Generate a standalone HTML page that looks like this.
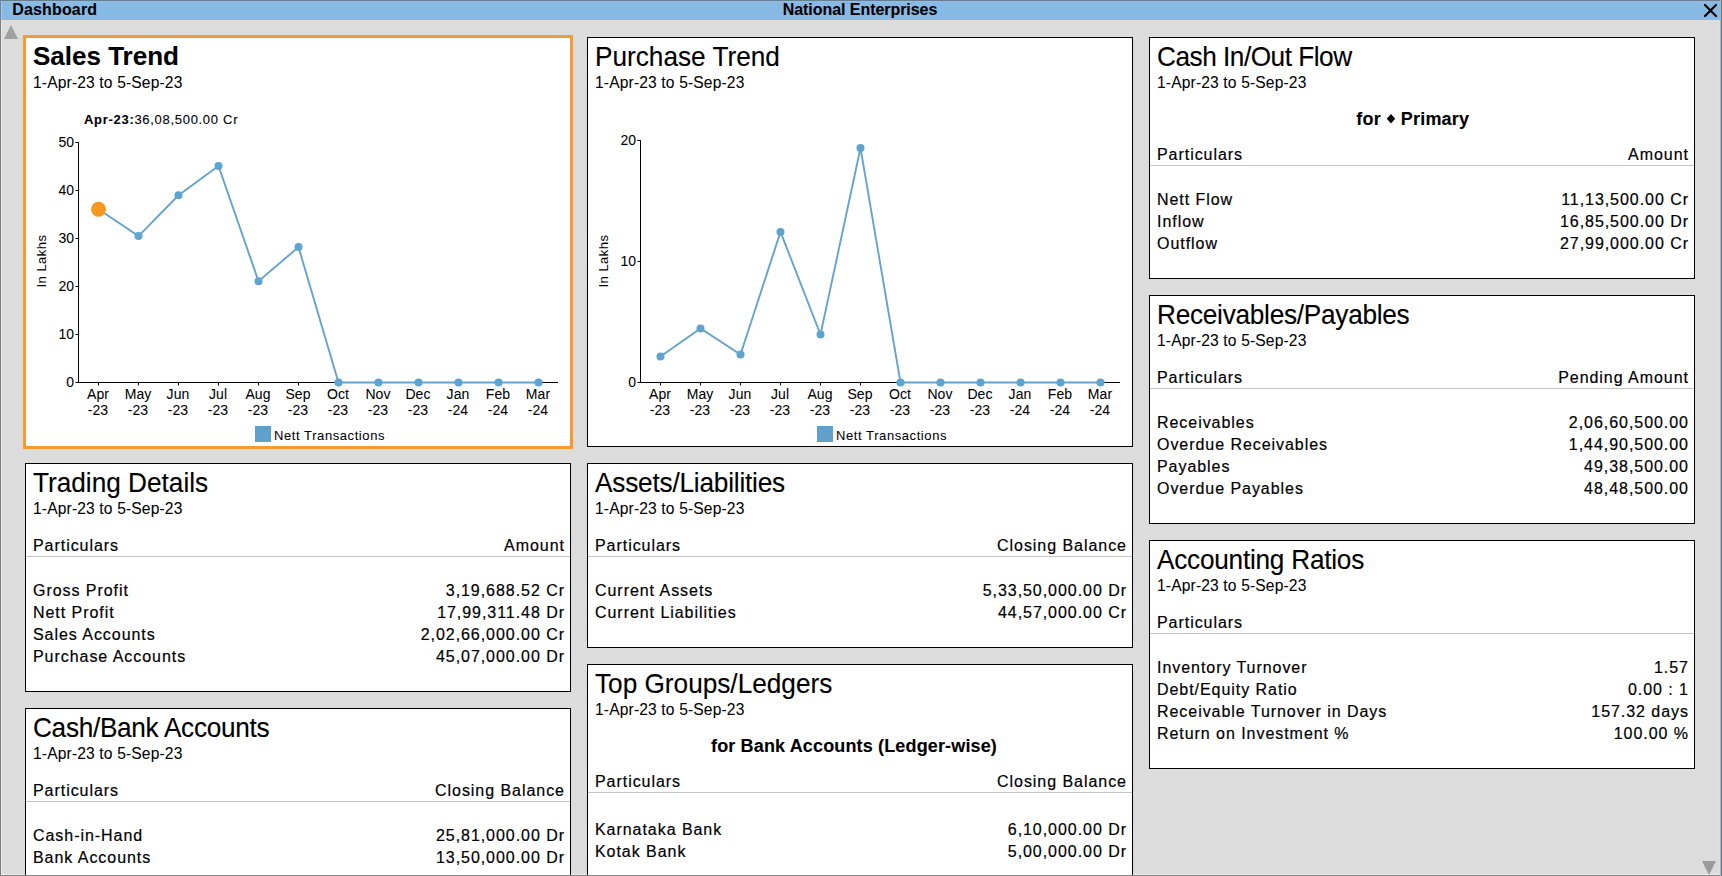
<!DOCTYPE html>
<html><head><meta charset="utf-8"><style>
html,body{margin:0;padding:0;width:1722px;height:876px;overflow:hidden;background:#dcdcdc}
body{position:relative;font-family:"Liberation Sans", sans-serif}
.abs{position:absolute}
.t{position:absolute;white-space:nowrap;line-height:1;color:#000;-webkit-text-stroke:0.25px #000}
.box{position:absolute;background:#fff;border:1px solid #000}
.focus{position:absolute;border:3px solid #f59a33;box-sizing:content-box}
.sep{position:absolute;height:1px;background:#c4c4c4}
</style></head><body>
<div class="abs" style="left:0;top:0;width:1722px;height:876px;background:#dcdcdc"></div>
<div class="abs" style="left:0;top:1px;width:1722px;height:19px;background:#87bbe6"></div>
<div class="abs" style="left:0;top:20px;width:1722px;height:1px;background:#dcdde1"></div>
<div class="abs" style="left:0;top:1px;width:1722px;height:1px;background:#9ab9da"></div>
<div class="abs" style="left:1px;top:20px;width:1px;height:856px;background:#e8e8e8"></div>
<div class="abs" style="left:0;top:874px;width:1722px;height:1px;background:#ececec"></div>
<div class="t" style="left:12.30px;top:1.56px;font-size:16px;font-weight:700;letter-spacing:0.15px;color:#000;-webkit-text-stroke:0.1px #000;">Dashboard</div>
<div class="t" style="left:860.00px;transform:translateX(-50%);top:1.56px;font-size:16px;font-weight:700;letter-spacing:-0.05px;color:#000;-webkit-text-stroke:0.1px #000;">National Enterprises</div>
<svg class="abs" width="1722" height="876" style="left:0;top:0"><path d="M1705 5L1716 16M1716 5L1705 16" stroke="#000" stroke-width="2.2" stroke-linecap="round"/><path d="M11 25L18 39H4Z" fill="#a0a0a0"/><path d="M1702 861H1716L1709 875Z" fill="#9a9a9a"/></svg>
<div class="box" style="left:25px;top:37px;width:544px;height:408px"></div>
<div class="focus" style="left:23px;top:35px;width:544px;height:408px"></div>
<div class="t" style="left:33.00px;top:42.79px;font-size:26px;font-weight:700;letter-spacing:0.0px;color:#000;-webkit-text-stroke:0.1px #000;">Sales Trend</div>
<div class="t" style="left:33.00px;top:74.59px;font-size:15.6px;font-weight:400;letter-spacing:0.15px;color:#000;-webkit-text-stroke:0.05px #000;">1-Apr-23 to 5-Sep-23</div>
<svg class="abs" width="1722" height="876" style="left:0;top:0"><path d="M75.5 142.5H78.5V382.5H558" fill="none" stroke="#000" stroke-width="1"/><path d="M75.5 382.5H78.5" stroke="#000" stroke-width="1"/><path d="M75.5 334.5H78.5" stroke="#000" stroke-width="1"/><path d="M75.5 286.5H78.5" stroke="#000" stroke-width="1"/><path d="M75.5 238.5H78.5" stroke="#000" stroke-width="1"/><path d="M75.5 190.5H78.5" stroke="#000" stroke-width="1"/><path d="M75.5 142.5H78.5" stroke="#000" stroke-width="1"/><path d="M98.5 382.5V385.5" stroke="#000" stroke-width="1"/><path d="M138.5 382.5V385.5" stroke="#000" stroke-width="1"/><path d="M178.5 382.5V385.5" stroke="#000" stroke-width="1"/><path d="M218.5 382.5V385.5" stroke="#000" stroke-width="1"/><path d="M258.5 382.5V385.5" stroke="#000" stroke-width="1"/><path d="M298.5 382.5V385.5" stroke="#000" stroke-width="1"/><path d="M338.5 382.5V385.5" stroke="#000" stroke-width="1"/><path d="M378.5 382.5V385.5" stroke="#000" stroke-width="1"/><path d="M418.5 382.5V385.5" stroke="#000" stroke-width="1"/><path d="M458.5 382.5V385.5" stroke="#000" stroke-width="1"/><path d="M498.5 382.5V385.5" stroke="#000" stroke-width="1"/><path d="M538.5 382.5V385.5" stroke="#000" stroke-width="1"/><path d="M98.5 209.3 L138.5 236.1 L178.5 195.3 L218.5 166.0 L258.5 281.2 L298.5 247.1 L338.5 382.5 L378.5 382.5 L418.5 382.5 L458.5 382.5 L498.5 382.5 L538.5 382.5" fill="none" stroke="#66a3cb" stroke-width="1.9"/><circle cx="138.5" cy="236.1" r="4" fill="#5fa3d0"/><circle cx="178.5" cy="195.3" r="4" fill="#5fa3d0"/><circle cx="218.5" cy="166.0" r="4" fill="#5fa3d0"/><circle cx="258.5" cy="281.2" r="4" fill="#5fa3d0"/><circle cx="298.5" cy="247.1" r="4" fill="#5fa3d0"/><circle cx="338.5" cy="382.5" r="4" fill="#5fa3d0"/><circle cx="378.5" cy="382.5" r="4" fill="#5fa3d0"/><circle cx="418.5" cy="382.5" r="4" fill="#5fa3d0"/><circle cx="458.5" cy="382.5" r="4" fill="#5fa3d0"/><circle cx="498.5" cy="382.5" r="4" fill="#5fa3d0"/><circle cx="538.5" cy="382.5" r="4" fill="#5fa3d0"/><circle cx="98.5" cy="209.3" r="7.5" fill="#f7981f"/></svg>
<div class="t" style="right:1648.00px;top:374.95px;font-size:14px;font-weight:400;letter-spacing:0px;color:#000;-webkit-text-stroke:0.05px #000;">0</div>
<div class="t" style="right:1648.00px;top:326.95px;font-size:14px;font-weight:400;letter-spacing:0px;color:#000;-webkit-text-stroke:0.05px #000;">10</div>
<div class="t" style="right:1648.00px;top:278.95px;font-size:14px;font-weight:400;letter-spacing:0px;color:#000;-webkit-text-stroke:0.05px #000;">20</div>
<div class="t" style="right:1648.00px;top:230.95px;font-size:14px;font-weight:400;letter-spacing:0px;color:#000;-webkit-text-stroke:0.05px #000;">30</div>
<div class="t" style="right:1648.00px;top:182.95px;font-size:14px;font-weight:400;letter-spacing:0px;color:#000;-webkit-text-stroke:0.05px #000;">40</div>
<div class="t" style="right:1648.00px;top:134.95px;font-size:14px;font-weight:400;letter-spacing:0px;color:#000;-webkit-text-stroke:0.05px #000;">50</div>
<div class="t" style="left:98.00px;transform:translateX(-50%);top:387.35px;font-size:14px;font-weight:400;letter-spacing:0.1px;color:#000;-webkit-text-stroke:0.05px #000;">Apr</div>
<div class="t" style="left:98.00px;transform:translateX(-50%);top:403.15px;font-size:14px;font-weight:400;letter-spacing:0.1px;color:#000;-webkit-text-stroke:0.05px #000;">-23</div>
<div class="t" style="left:138.00px;transform:translateX(-50%);top:387.35px;font-size:14px;font-weight:400;letter-spacing:0.1px;color:#000;-webkit-text-stroke:0.05px #000;">May</div>
<div class="t" style="left:138.00px;transform:translateX(-50%);top:403.15px;font-size:14px;font-weight:400;letter-spacing:0.1px;color:#000;-webkit-text-stroke:0.05px #000;">-23</div>
<div class="t" style="left:178.00px;transform:translateX(-50%);top:387.35px;font-size:14px;font-weight:400;letter-spacing:0.1px;color:#000;-webkit-text-stroke:0.05px #000;">Jun</div>
<div class="t" style="left:178.00px;transform:translateX(-50%);top:403.15px;font-size:14px;font-weight:400;letter-spacing:0.1px;color:#000;-webkit-text-stroke:0.05px #000;">-23</div>
<div class="t" style="left:218.00px;transform:translateX(-50%);top:387.35px;font-size:14px;font-weight:400;letter-spacing:0.1px;color:#000;-webkit-text-stroke:0.05px #000;">Jul</div>
<div class="t" style="left:218.00px;transform:translateX(-50%);top:403.15px;font-size:14px;font-weight:400;letter-spacing:0.1px;color:#000;-webkit-text-stroke:0.05px #000;">-23</div>
<div class="t" style="left:258.00px;transform:translateX(-50%);top:387.35px;font-size:14px;font-weight:400;letter-spacing:0.1px;color:#000;-webkit-text-stroke:0.05px #000;">Aug</div>
<div class="t" style="left:258.00px;transform:translateX(-50%);top:403.15px;font-size:14px;font-weight:400;letter-spacing:0.1px;color:#000;-webkit-text-stroke:0.05px #000;">-23</div>
<div class="t" style="left:298.00px;transform:translateX(-50%);top:387.35px;font-size:14px;font-weight:400;letter-spacing:0.1px;color:#000;-webkit-text-stroke:0.05px #000;">Sep</div>
<div class="t" style="left:298.00px;transform:translateX(-50%);top:403.15px;font-size:14px;font-weight:400;letter-spacing:0.1px;color:#000;-webkit-text-stroke:0.05px #000;">-23</div>
<div class="t" style="left:338.00px;transform:translateX(-50%);top:387.35px;font-size:14px;font-weight:400;letter-spacing:0.1px;color:#000;-webkit-text-stroke:0.05px #000;">Oct</div>
<div class="t" style="left:338.00px;transform:translateX(-50%);top:403.15px;font-size:14px;font-weight:400;letter-spacing:0.1px;color:#000;-webkit-text-stroke:0.05px #000;">-23</div>
<div class="t" style="left:378.00px;transform:translateX(-50%);top:387.35px;font-size:14px;font-weight:400;letter-spacing:0.1px;color:#000;-webkit-text-stroke:0.05px #000;">Nov</div>
<div class="t" style="left:378.00px;transform:translateX(-50%);top:403.15px;font-size:14px;font-weight:400;letter-spacing:0.1px;color:#000;-webkit-text-stroke:0.05px #000;">-23</div>
<div class="t" style="left:418.00px;transform:translateX(-50%);top:387.35px;font-size:14px;font-weight:400;letter-spacing:0.1px;color:#000;-webkit-text-stroke:0.05px #000;">Dec</div>
<div class="t" style="left:418.00px;transform:translateX(-50%);top:403.15px;font-size:14px;font-weight:400;letter-spacing:0.1px;color:#000;-webkit-text-stroke:0.05px #000;">-23</div>
<div class="t" style="left:458.00px;transform:translateX(-50%);top:387.35px;font-size:14px;font-weight:400;letter-spacing:0.1px;color:#000;-webkit-text-stroke:0.05px #000;">Jan</div>
<div class="t" style="left:458.00px;transform:translateX(-50%);top:403.15px;font-size:14px;font-weight:400;letter-spacing:0.1px;color:#000;-webkit-text-stroke:0.05px #000;">-24</div>
<div class="t" style="left:498.00px;transform:translateX(-50%);top:387.35px;font-size:14px;font-weight:400;letter-spacing:0.1px;color:#000;-webkit-text-stroke:0.05px #000;">Feb</div>
<div class="t" style="left:498.00px;transform:translateX(-50%);top:403.15px;font-size:14px;font-weight:400;letter-spacing:0.1px;color:#000;-webkit-text-stroke:0.05px #000;">-24</div>
<div class="t" style="left:538.00px;transform:translateX(-50%);top:387.35px;font-size:14px;font-weight:400;letter-spacing:0.1px;color:#000;-webkit-text-stroke:0.05px #000;">Mar</div>
<div class="t" style="left:538.00px;transform:translateX(-50%);top:403.15px;font-size:14px;font-weight:400;letter-spacing:0.1px;color:#000;-webkit-text-stroke:0.05px #000;">-24</div>
<div class="t" style="left:40.8px;top:261px;font-size:13px;letter-spacing:0.5px;-webkit-text-stroke:0.05px #000;transform:translate(-50%,-50%) rotate(-90deg);line-height:1">In Lakhs</div>
<div class="abs" style="left:255px;top:426px;width:16px;height:16px;background:#62a0cc"></div>
<div class="t" style="left:274.00px;top:429.00px;font-size:13px;font-weight:400;letter-spacing:0.58px;color:#000;-webkit-text-stroke:0.05px #000;">Nett Transactions</div>
<div class="t" style="left:84px;top:112.70px;font-size:13px;letter-spacing:0.7px;-webkit-text-stroke:0.1px #000"><b>Apr-23:</b>36,08,500.00 Cr</div>
<div class="box" style="left:25px;top:463px;width:544px;height:227px"></div>
<div class="t" style="left:33.00px;top:470.12px;font-size:26.2px;font-weight:400;letter-spacing:0px;color:#000;transform:scaleY(1.05);transform-origin:0 22.18px;-webkit-text-stroke:0.12px #000;">Trading Details</div>
<div class="t" style="left:33.00px;top:500.59px;font-size:15.6px;font-weight:400;letter-spacing:0.15px;color:#000;-webkit-text-stroke:0.05px #000;">1-Apr-23 to 5-Sep-23</div>
<div class="t" style="left:33.00px;top:537.56px;font-size:16px;font-weight:400;letter-spacing:0.95px;color:#000;-webkit-text-stroke:0.2px #000;">Particulars</div>
<div class="t" style="right:1158.00px;top:537.56px;font-size:16px;font-weight:400;letter-spacing:0.95px;margin-right:-0.95px;color:#000;-webkit-text-stroke:0.2px #000;">Amount</div>
<div class="sep" style="left:26px;top:556px;width:544px"></div>
<div class="t" style="left:33.00px;top:582.56px;font-size:16px;font-weight:400;letter-spacing:0.95px;color:#000;-webkit-text-stroke:0.2px #000;">Gross Profit</div>
<div class="t" style="right:1158.00px;top:582.56px;font-size:16px;font-weight:400;letter-spacing:0.95px;margin-right:-0.95px;color:#000;-webkit-text-stroke:0.2px #000;">3,19,688.52 Cr</div>
<div class="t" style="left:33.00px;top:604.56px;font-size:16px;font-weight:400;letter-spacing:0.95px;color:#000;-webkit-text-stroke:0.2px #000;">Nett Profit</div>
<div class="t" style="right:1158.00px;top:604.56px;font-size:16px;font-weight:400;letter-spacing:0.95px;margin-right:-0.95px;color:#000;-webkit-text-stroke:0.2px #000;">17,99,311.48 Dr</div>
<div class="t" style="left:33.00px;top:626.56px;font-size:16px;font-weight:400;letter-spacing:0.95px;color:#000;-webkit-text-stroke:0.2px #000;">Sales Accounts</div>
<div class="t" style="right:1158.00px;top:626.56px;font-size:16px;font-weight:400;letter-spacing:0.95px;margin-right:-0.95px;color:#000;-webkit-text-stroke:0.2px #000;">2,02,66,000.00 Cr</div>
<div class="t" style="left:33.00px;top:648.56px;font-size:16px;font-weight:400;letter-spacing:0.95px;color:#000;-webkit-text-stroke:0.2px #000;">Purchase Accounts</div>
<div class="t" style="right:1158.00px;top:648.56px;font-size:16px;font-weight:400;letter-spacing:0.95px;margin-right:-0.95px;color:#000;-webkit-text-stroke:0.2px #000;">45,07,000.00 Dr</div>
<div class="box" style="left:25px;top:708px;width:544px;height:198px"></div>
<div class="t" style="left:33.00px;top:715.12px;font-size:26.2px;font-weight:400;letter-spacing:-0.3px;color:#000;transform:scaleY(1.05);transform-origin:0 22.18px;-webkit-text-stroke:0.12px #000;">Cash/Bank Accounts</div>
<div class="t" style="left:33.00px;top:745.59px;font-size:15.6px;font-weight:400;letter-spacing:0.15px;color:#000;-webkit-text-stroke:0.05px #000;">1-Apr-23 to 5-Sep-23</div>
<div class="t" style="left:33.00px;top:782.56px;font-size:16px;font-weight:400;letter-spacing:0.95px;color:#000;-webkit-text-stroke:0.2px #000;">Particulars</div>
<div class="t" style="right:1158.00px;top:782.56px;font-size:16px;font-weight:400;letter-spacing:0.95px;margin-right:-0.95px;color:#000;-webkit-text-stroke:0.2px #000;">Closing Balance</div>
<div class="sep" style="left:26px;top:801px;width:544px"></div>
<div class="t" style="left:33.00px;top:827.56px;font-size:16px;font-weight:400;letter-spacing:0.95px;color:#000;-webkit-text-stroke:0.2px #000;">Cash-in-Hand</div>
<div class="t" style="right:1158.00px;top:827.56px;font-size:16px;font-weight:400;letter-spacing:0.95px;margin-right:-0.95px;color:#000;-webkit-text-stroke:0.2px #000;">25,81,000.00 Dr</div>
<div class="t" style="left:33.00px;top:849.56px;font-size:16px;font-weight:400;letter-spacing:0.95px;color:#000;-webkit-text-stroke:0.2px #000;">Bank Accounts</div>
<div class="t" style="right:1158.00px;top:849.56px;font-size:16px;font-weight:400;letter-spacing:0.95px;margin-right:-0.95px;color:#000;-webkit-text-stroke:0.2px #000;">13,50,000.00 Dr</div>
<div class="box" style="left:587px;top:37px;width:544px;height:408px"></div>
<div class="t" style="left:595.00px;top:44.12px;font-size:26.2px;font-weight:400;letter-spacing:0px;color:#000;transform:scaleY(1.05);transform-origin:0 22.18px;-webkit-text-stroke:0.12px #000;">Purchase Trend</div>
<div class="t" style="left:595.00px;top:74.59px;font-size:15.6px;font-weight:400;letter-spacing:0.15px;color:#000;-webkit-text-stroke:0.05px #000;">1-Apr-23 to 5-Sep-23</div>
<svg class="abs" width="1722" height="876" style="left:0;top:0"><path d="M637.5 140.5H640.5V382.5H1120" fill="none" stroke="#000" stroke-width="1"/><path d="M637.5 382.5H640.5" stroke="#000" stroke-width="1"/><path d="M637.5 261.5H640.5" stroke="#000" stroke-width="1"/><path d="M637.5 140.5H640.5" stroke="#000" stroke-width="1"/><path d="M660.5 382.5V385.5" stroke="#000" stroke-width="1"/><path d="M700.5 382.5V385.5" stroke="#000" stroke-width="1"/><path d="M740.5 382.5V385.5" stroke="#000" stroke-width="1"/><path d="M780.5 382.5V385.5" stroke="#000" stroke-width="1"/><path d="M820.5 382.5V385.5" stroke="#000" stroke-width="1"/><path d="M860.5 382.5V385.5" stroke="#000" stroke-width="1"/><path d="M900.5 382.5V385.5" stroke="#000" stroke-width="1"/><path d="M940.5 382.5V385.5" stroke="#000" stroke-width="1"/><path d="M980.5 382.5V385.5" stroke="#000" stroke-width="1"/><path d="M1020.5 382.5V385.5" stroke="#000" stroke-width="1"/><path d="M1060.5 382.5V385.5" stroke="#000" stroke-width="1"/><path d="M1100.5 382.5V385.5" stroke="#000" stroke-width="1"/><path d="M660.5 356.5 L700.5 328.5 L740.5 354.5 L780.5 231.9 L820.5 334.5 L860.5 148.0 L900.5 382.5 L940.5 382.5 L980.5 382.5 L1020.5 382.5 L1060.5 382.5 L1100.5 382.5" fill="none" stroke="#66a3cb" stroke-width="1.9"/><circle cx="660.5" cy="356.5" r="4" fill="#5fa3d0"/><circle cx="700.5" cy="328.5" r="4" fill="#5fa3d0"/><circle cx="740.5" cy="354.5" r="4" fill="#5fa3d0"/><circle cx="780.5" cy="231.9" r="4" fill="#5fa3d0"/><circle cx="820.5" cy="334.5" r="4" fill="#5fa3d0"/><circle cx="860.5" cy="148.0" r="4" fill="#5fa3d0"/><circle cx="900.5" cy="382.5" r="4" fill="#5fa3d0"/><circle cx="940.5" cy="382.5" r="4" fill="#5fa3d0"/><circle cx="980.5" cy="382.5" r="4" fill="#5fa3d0"/><circle cx="1020.5" cy="382.5" r="4" fill="#5fa3d0"/><circle cx="1060.5" cy="382.5" r="4" fill="#5fa3d0"/><circle cx="1100.5" cy="382.5" r="4" fill="#5fa3d0"/></svg>
<div class="t" style="right:1086.00px;top:374.95px;font-size:14px;font-weight:400;letter-spacing:0px;color:#000;-webkit-text-stroke:0.05px #000;">0</div>
<div class="t" style="right:1086.00px;top:253.95px;font-size:14px;font-weight:400;letter-spacing:0px;color:#000;-webkit-text-stroke:0.05px #000;">10</div>
<div class="t" style="right:1086.00px;top:132.95px;font-size:14px;font-weight:400;letter-spacing:0px;color:#000;-webkit-text-stroke:0.05px #000;">20</div>
<div class="t" style="left:660.00px;transform:translateX(-50%);top:387.35px;font-size:14px;font-weight:400;letter-spacing:0.1px;color:#000;-webkit-text-stroke:0.05px #000;">Apr</div>
<div class="t" style="left:660.00px;transform:translateX(-50%);top:403.15px;font-size:14px;font-weight:400;letter-spacing:0.1px;color:#000;-webkit-text-stroke:0.05px #000;">-23</div>
<div class="t" style="left:700.00px;transform:translateX(-50%);top:387.35px;font-size:14px;font-weight:400;letter-spacing:0.1px;color:#000;-webkit-text-stroke:0.05px #000;">May</div>
<div class="t" style="left:700.00px;transform:translateX(-50%);top:403.15px;font-size:14px;font-weight:400;letter-spacing:0.1px;color:#000;-webkit-text-stroke:0.05px #000;">-23</div>
<div class="t" style="left:740.00px;transform:translateX(-50%);top:387.35px;font-size:14px;font-weight:400;letter-spacing:0.1px;color:#000;-webkit-text-stroke:0.05px #000;">Jun</div>
<div class="t" style="left:740.00px;transform:translateX(-50%);top:403.15px;font-size:14px;font-weight:400;letter-spacing:0.1px;color:#000;-webkit-text-stroke:0.05px #000;">-23</div>
<div class="t" style="left:780.00px;transform:translateX(-50%);top:387.35px;font-size:14px;font-weight:400;letter-spacing:0.1px;color:#000;-webkit-text-stroke:0.05px #000;">Jul</div>
<div class="t" style="left:780.00px;transform:translateX(-50%);top:403.15px;font-size:14px;font-weight:400;letter-spacing:0.1px;color:#000;-webkit-text-stroke:0.05px #000;">-23</div>
<div class="t" style="left:820.00px;transform:translateX(-50%);top:387.35px;font-size:14px;font-weight:400;letter-spacing:0.1px;color:#000;-webkit-text-stroke:0.05px #000;">Aug</div>
<div class="t" style="left:820.00px;transform:translateX(-50%);top:403.15px;font-size:14px;font-weight:400;letter-spacing:0.1px;color:#000;-webkit-text-stroke:0.05px #000;">-23</div>
<div class="t" style="left:860.00px;transform:translateX(-50%);top:387.35px;font-size:14px;font-weight:400;letter-spacing:0.1px;color:#000;-webkit-text-stroke:0.05px #000;">Sep</div>
<div class="t" style="left:860.00px;transform:translateX(-50%);top:403.15px;font-size:14px;font-weight:400;letter-spacing:0.1px;color:#000;-webkit-text-stroke:0.05px #000;">-23</div>
<div class="t" style="left:900.00px;transform:translateX(-50%);top:387.35px;font-size:14px;font-weight:400;letter-spacing:0.1px;color:#000;-webkit-text-stroke:0.05px #000;">Oct</div>
<div class="t" style="left:900.00px;transform:translateX(-50%);top:403.15px;font-size:14px;font-weight:400;letter-spacing:0.1px;color:#000;-webkit-text-stroke:0.05px #000;">-23</div>
<div class="t" style="left:940.00px;transform:translateX(-50%);top:387.35px;font-size:14px;font-weight:400;letter-spacing:0.1px;color:#000;-webkit-text-stroke:0.05px #000;">Nov</div>
<div class="t" style="left:940.00px;transform:translateX(-50%);top:403.15px;font-size:14px;font-weight:400;letter-spacing:0.1px;color:#000;-webkit-text-stroke:0.05px #000;">-23</div>
<div class="t" style="left:980.00px;transform:translateX(-50%);top:387.35px;font-size:14px;font-weight:400;letter-spacing:0.1px;color:#000;-webkit-text-stroke:0.05px #000;">Dec</div>
<div class="t" style="left:980.00px;transform:translateX(-50%);top:403.15px;font-size:14px;font-weight:400;letter-spacing:0.1px;color:#000;-webkit-text-stroke:0.05px #000;">-23</div>
<div class="t" style="left:1020.00px;transform:translateX(-50%);top:387.35px;font-size:14px;font-weight:400;letter-spacing:0.1px;color:#000;-webkit-text-stroke:0.05px #000;">Jan</div>
<div class="t" style="left:1020.00px;transform:translateX(-50%);top:403.15px;font-size:14px;font-weight:400;letter-spacing:0.1px;color:#000;-webkit-text-stroke:0.05px #000;">-24</div>
<div class="t" style="left:1060.00px;transform:translateX(-50%);top:387.35px;font-size:14px;font-weight:400;letter-spacing:0.1px;color:#000;-webkit-text-stroke:0.05px #000;">Feb</div>
<div class="t" style="left:1060.00px;transform:translateX(-50%);top:403.15px;font-size:14px;font-weight:400;letter-spacing:0.1px;color:#000;-webkit-text-stroke:0.05px #000;">-24</div>
<div class="t" style="left:1100.00px;transform:translateX(-50%);top:387.35px;font-size:14px;font-weight:400;letter-spacing:0.1px;color:#000;-webkit-text-stroke:0.05px #000;">Mar</div>
<div class="t" style="left:1100.00px;transform:translateX(-50%);top:403.15px;font-size:14px;font-weight:400;letter-spacing:0.1px;color:#000;-webkit-text-stroke:0.05px #000;">-24</div>
<div class="t" style="left:602.8px;top:261px;font-size:13px;letter-spacing:0.5px;-webkit-text-stroke:0.05px #000;transform:translate(-50%,-50%) rotate(-90deg);line-height:1">In Lakhs</div>
<div class="abs" style="left:817px;top:426px;width:16px;height:16px;background:#62a0cc"></div>
<div class="t" style="left:836.00px;top:429.00px;font-size:13px;font-weight:400;letter-spacing:0.58px;color:#000;-webkit-text-stroke:0.05px #000;">Nett Transactions</div>
<div class="box" style="left:587px;top:463px;width:544px;height:183px"></div>
<div class="t" style="left:595.00px;top:470.12px;font-size:26.2px;font-weight:400;letter-spacing:-0.2px;color:#000;transform:scaleY(1.05);transform-origin:0 22.18px;-webkit-text-stroke:0.12px #000;">Assets/Liabilities</div>
<div class="t" style="left:595.00px;top:500.59px;font-size:15.6px;font-weight:400;letter-spacing:0.15px;color:#000;-webkit-text-stroke:0.05px #000;">1-Apr-23 to 5-Sep-23</div>
<div class="t" style="left:595.00px;top:537.56px;font-size:16px;font-weight:400;letter-spacing:0.95px;color:#000;-webkit-text-stroke:0.2px #000;">Particulars</div>
<div class="t" style="right:596.00px;top:537.56px;font-size:16px;font-weight:400;letter-spacing:0.95px;margin-right:-0.95px;color:#000;-webkit-text-stroke:0.2px #000;">Closing Balance</div>
<div class="sep" style="left:588px;top:556px;width:544px"></div>
<div class="t" style="left:595.00px;top:582.56px;font-size:16px;font-weight:400;letter-spacing:0.95px;color:#000;-webkit-text-stroke:0.2px #000;">Current Assets</div>
<div class="t" style="right:596.00px;top:582.56px;font-size:16px;font-weight:400;letter-spacing:0.95px;margin-right:-0.95px;color:#000;-webkit-text-stroke:0.2px #000;">5,33,50,000.00 Dr</div>
<div class="t" style="left:595.00px;top:604.56px;font-size:16px;font-weight:400;letter-spacing:0.95px;color:#000;-webkit-text-stroke:0.2px #000;">Current Liabilities</div>
<div class="t" style="right:596.00px;top:604.56px;font-size:16px;font-weight:400;letter-spacing:0.95px;margin-right:-0.95px;color:#000;-webkit-text-stroke:0.2px #000;">44,57,000.00 Cr</div>
<div class="box" style="left:587px;top:664px;width:544px;height:248px"></div>
<div class="t" style="left:595.00px;top:671.12px;font-size:26.2px;font-weight:400;letter-spacing:0px;color:#000;transform:scaleY(1.05);transform-origin:0 22.18px;-webkit-text-stroke:0.12px #000;">Top Groups/Ledgers</div>
<div class="t" style="left:595.00px;top:701.59px;font-size:15.6px;font-weight:400;letter-spacing:0.15px;color:#000;-webkit-text-stroke:0.05px #000;">1-Apr-23 to 5-Sep-23</div>
<div class="t" style="left:854.00px;transform:translateX(-50%);top:736.76px;font-size:18px;font-weight:700;letter-spacing:0.15px;color:#000;-webkit-text-stroke:0.1px #000;">for Bank Accounts (Ledger-wise)</div>
<div class="t" style="left:595.00px;top:773.56px;font-size:16px;font-weight:400;letter-spacing:0.95px;color:#000;-webkit-text-stroke:0.2px #000;">Particulars</div>
<div class="t" style="right:596.00px;top:773.56px;font-size:16px;font-weight:400;letter-spacing:0.95px;margin-right:-0.95px;color:#000;-webkit-text-stroke:0.2px #000;">Closing Balance</div>
<div class="sep" style="left:588px;top:792px;width:544px"></div>
<div class="t" style="left:595.00px;top:821.56px;font-size:16px;font-weight:400;letter-spacing:0.95px;color:#000;-webkit-text-stroke:0.2px #000;">Karnataka Bank</div>
<div class="t" style="right:596.00px;top:821.56px;font-size:16px;font-weight:400;letter-spacing:0.95px;margin-right:-0.95px;color:#000;-webkit-text-stroke:0.2px #000;">6,10,000.00 Dr</div>
<div class="t" style="left:595.00px;top:843.56px;font-size:16px;font-weight:400;letter-spacing:0.95px;color:#000;-webkit-text-stroke:0.2px #000;">Kotak Bank</div>
<div class="t" style="right:596.00px;top:843.56px;font-size:16px;font-weight:400;letter-spacing:0.95px;margin-right:-0.95px;color:#000;-webkit-text-stroke:0.2px #000;">5,00,000.00 Dr</div>
<div class="box" style="left:1149px;top:37px;width:544px;height:240px"></div>
<div class="t" style="left:1157.00px;top:44.12px;font-size:26.2px;font-weight:400;letter-spacing:-0.48px;color:#000;transform:scaleY(1.05);transform-origin:0 22.18px;-webkit-text-stroke:0.12px #000;">Cash In/Out Flow</div>
<div class="t" style="left:1157.00px;top:74.59px;font-size:15.6px;font-weight:400;letter-spacing:0.15px;color:#000;-webkit-text-stroke:0.05px #000;">1-Apr-23 to 5-Sep-23</div>
<div class="t" style="left:1356.30px;top:109.76px;font-size:18px;font-weight:700;letter-spacing:0.2px;color:#000;-webkit-text-stroke:0.1px #000;">for</div>
<div class="t" style="left:1400.80px;top:109.76px;font-size:18px;font-weight:700;letter-spacing:0.2px;color:#000;-webkit-text-stroke:0.1px #000;">Primary</div>
<svg class="abs" width="10" height="13" style="left:1386px;top:113px"><path d="M5 1L9.2 5.8L5 10.6L0.8 5.8Z" fill="#000"/></svg>
<div class="t" style="left:1157.00px;top:146.56px;font-size:16px;font-weight:400;letter-spacing:0.95px;color:#000;-webkit-text-stroke:0.2px #000;">Particulars</div>
<div class="t" style="right:34.00px;top:146.56px;font-size:16px;font-weight:400;letter-spacing:0.95px;margin-right:-0.95px;color:#000;-webkit-text-stroke:0.2px #000;">Amount</div>
<div class="sep" style="left:1150px;top:165px;width:544px"></div>
<div class="t" style="left:1157.00px;top:191.56px;font-size:16px;font-weight:400;letter-spacing:0.95px;color:#000;-webkit-text-stroke:0.2px #000;">Nett Flow</div>
<div class="t" style="right:34.00px;top:191.56px;font-size:16px;font-weight:400;letter-spacing:0.95px;margin-right:-0.95px;color:#000;-webkit-text-stroke:0.2px #000;">11,13,500.00 Cr</div>
<div class="t" style="left:1157.00px;top:213.56px;font-size:16px;font-weight:400;letter-spacing:0.95px;color:#000;-webkit-text-stroke:0.2px #000;">Inflow</div>
<div class="t" style="right:34.00px;top:213.56px;font-size:16px;font-weight:400;letter-spacing:0.95px;margin-right:-0.95px;color:#000;-webkit-text-stroke:0.2px #000;">16,85,500.00 Dr</div>
<div class="t" style="left:1157.00px;top:235.56px;font-size:16px;font-weight:400;letter-spacing:0.95px;color:#000;-webkit-text-stroke:0.2px #000;">Outflow</div>
<div class="t" style="right:34.00px;top:235.56px;font-size:16px;font-weight:400;letter-spacing:0.95px;margin-right:-0.95px;color:#000;-webkit-text-stroke:0.2px #000;">27,99,000.00 Cr</div>
<div class="box" style="left:1149px;top:295px;width:544px;height:227px"></div>
<div class="t" style="left:1157.00px;top:302.12px;font-size:26.2px;font-weight:400;letter-spacing:-0.26px;color:#000;transform:scaleY(1.05);transform-origin:0 22.18px;-webkit-text-stroke:0.12px #000;">Receivables/Payables</div>
<div class="t" style="left:1157.00px;top:332.59px;font-size:15.6px;font-weight:400;letter-spacing:0.15px;color:#000;-webkit-text-stroke:0.05px #000;">1-Apr-23 to 5-Sep-23</div>
<div class="t" style="left:1157.00px;top:369.56px;font-size:16px;font-weight:400;letter-spacing:0.95px;color:#000;-webkit-text-stroke:0.2px #000;">Particulars</div>
<div class="t" style="right:34.00px;top:369.56px;font-size:16px;font-weight:400;letter-spacing:0.95px;margin-right:-0.95px;color:#000;-webkit-text-stroke:0.2px #000;">Pending Amount</div>
<div class="sep" style="left:1150px;top:388px;width:544px"></div>
<div class="t" style="left:1157.00px;top:414.56px;font-size:16px;font-weight:400;letter-spacing:0.95px;color:#000;-webkit-text-stroke:0.2px #000;">Receivables</div>
<div class="t" style="right:34.00px;top:414.56px;font-size:16px;font-weight:400;letter-spacing:0.95px;margin-right:-0.95px;color:#000;-webkit-text-stroke:0.2px #000;">2,06,60,500.00</div>
<div class="t" style="left:1157.00px;top:436.56px;font-size:16px;font-weight:400;letter-spacing:0.95px;color:#000;-webkit-text-stroke:0.2px #000;">Overdue Receivables</div>
<div class="t" style="right:34.00px;top:436.56px;font-size:16px;font-weight:400;letter-spacing:0.95px;margin-right:-0.95px;color:#000;-webkit-text-stroke:0.2px #000;">1,44,90,500.00</div>
<div class="t" style="left:1157.00px;top:458.56px;font-size:16px;font-weight:400;letter-spacing:0.95px;color:#000;-webkit-text-stroke:0.2px #000;">Payables</div>
<div class="t" style="right:34.00px;top:458.56px;font-size:16px;font-weight:400;letter-spacing:0.95px;margin-right:-0.95px;color:#000;-webkit-text-stroke:0.2px #000;">49,38,500.00</div>
<div class="t" style="left:1157.00px;top:480.56px;font-size:16px;font-weight:400;letter-spacing:0.95px;color:#000;-webkit-text-stroke:0.2px #000;">Overdue Payables</div>
<div class="t" style="right:34.00px;top:480.56px;font-size:16px;font-weight:400;letter-spacing:0.95px;margin-right:-0.95px;color:#000;-webkit-text-stroke:0.2px #000;">48,48,500.00</div>
<div class="box" style="left:1149px;top:540px;width:544px;height:227px"></div>
<div class="t" style="left:1157.00px;top:547.12px;font-size:26.2px;font-weight:400;letter-spacing:-0.24px;color:#000;transform:scaleY(1.05);transform-origin:0 22.18px;-webkit-text-stroke:0.12px #000;">Accounting Ratios</div>
<div class="t" style="left:1157.00px;top:577.59px;font-size:15.6px;font-weight:400;letter-spacing:0.15px;color:#000;-webkit-text-stroke:0.05px #000;">1-Apr-23 to 5-Sep-23</div>
<div class="t" style="left:1157.00px;top:614.56px;font-size:16px;font-weight:400;letter-spacing:0.95px;color:#000;-webkit-text-stroke:0.2px #000;">Particulars</div>
<div class="sep" style="left:1150px;top:633px;width:544px"></div>
<div class="t" style="left:1157.00px;top:659.56px;font-size:16px;font-weight:400;letter-spacing:0.95px;color:#000;-webkit-text-stroke:0.2px #000;">Inventory Turnover</div>
<div class="t" style="right:34.00px;top:659.56px;font-size:16px;font-weight:400;letter-spacing:0.95px;margin-right:-0.95px;color:#000;-webkit-text-stroke:0.2px #000;">1.57</div>
<div class="t" style="left:1157.00px;top:681.56px;font-size:16px;font-weight:400;letter-spacing:0.95px;color:#000;-webkit-text-stroke:0.2px #000;">Debt/Equity Ratio</div>
<div class="t" style="right:34.00px;top:681.56px;font-size:16px;font-weight:400;letter-spacing:0.95px;margin-right:-0.95px;color:#000;-webkit-text-stroke:0.2px #000;">0.00 : 1</div>
<div class="t" style="left:1157.00px;top:703.56px;font-size:16px;font-weight:400;letter-spacing:0.95px;color:#000;-webkit-text-stroke:0.2px #000;">Receivable Turnover in Days</div>
<div class="t" style="right:34.00px;top:703.56px;font-size:16px;font-weight:400;letter-spacing:0.95px;margin-right:-0.95px;color:#000;-webkit-text-stroke:0.2px #000;">157.32 days</div>
<div class="t" style="left:1157.00px;top:725.56px;font-size:16px;font-weight:400;letter-spacing:0.95px;color:#000;-webkit-text-stroke:0.2px #000;">Return on Investment %</div>
<div class="t" style="right:34.00px;top:725.56px;font-size:16px;font-weight:400;letter-spacing:0.95px;margin-right:-0.95px;color:#000;-webkit-text-stroke:0.2px #000;">100.00 %</div>
<div class="abs" style="left:0;top:0;width:1722px;height:1px;background:#667e92"></div>
<div class="abs" style="left:0;top:0;width:1px;height:876px;background:#7c7c7c"></div>
<div class="abs" style="left:0;top:0;width:1px;height:20px;background:#6c8296"></div>
<div class="abs" style="left:1px;top:1px;width:1px;height:19px;background:#a9cdef"></div>
<div class="abs" style="left:1719px;top:20px;width:1px;height:855px;background:#dcdee2"></div>
<div class="abs" style="left:1720px;top:0;width:1px;height:876px;background:#a5b5c0"></div>
<div class="abs" style="left:1721px;top:0;width:1px;height:876px;background:#5f7f90"></div>
<div class="abs" style="left:0;top:875px;width:1720px;height:1px;background:#858585"></div>
</body></html>
